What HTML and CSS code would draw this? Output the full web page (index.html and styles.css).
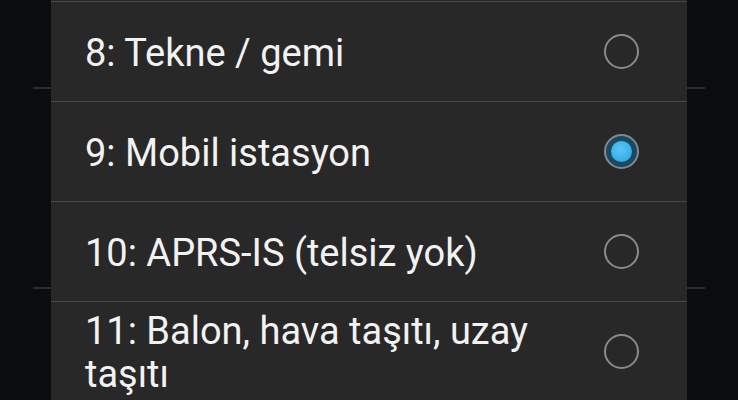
FILE: index.html
```html
<!DOCTYPE html>
<html lang="tr">
<head>
<meta charset="utf-8">
<link rel="stylesheet" href="styles.css">
</head>
<body>
<div class="backdrop">
  <div class="bg-line bg-line-1"></div>
  <div class="bg-line bg-line-2"></div>
</div>
<div class="dialog">
  <div class="item">
    <span class="label">8: Tekne / gemi</span>
    <span class="radio"></span>
  </div>
  <div class="item">
    <span class="label">9: Mobil istasyon</span>
    <span class="radio checked"><span class="dot"></span></span>
  </div>
  <div class="item">
    <span class="label">10: APRS-IS (telsiz yok)</span>
    <span class="radio"></span>
  </div>
  <div class="item">
    <span class="label">11: Balon, hava taşıtı, uzay taşıtı</span>
    <span class="radio"></span>
  </div>
</div>
</body>
</html>
```

FILE: styles.css
```css
html, body {
  margin: 0;
  padding: 0;
  width: 738px;
  height: 400px;
  overflow: hidden;
  background: #0b0c0e;
  font-family: Roboto, "Noto Sans", sans-serif;
}

.backdrop {
  position: absolute;
  inset: 0;
  z-index: 0;
}

.bg-line {
  position: absolute;
  left: 33px;
  width: 672px;
  height: 2px;
  background: #2b2c2e;
}

.bg-line-1 { top: 87px; }
.bg-line-2 { top: 287px; }

.dialog {
  position: relative;
  z-index: 1;
  margin-left: 51px;
  width: 636px;
  height: 400px;
  background: #282828;
  padding-top: 1px;
  box-sizing: border-box;
}

.item {
  height: 100px;
  box-sizing: border-box;
  border-top: 1px solid #474747;
  display: flex;
  align-items: center;
  padding: 3px 48px 0 34px;
}

.label {
  flex: 1;
  color: #f2f2f2;
  font-size: 38px;
  line-height: 43px;
  padding-right: 40px;
}

.radio {
  flex: none;
  width: 35px;
  height: 35px;
  margin-top: -3px;
  box-sizing: border-box;
  border: 2px solid #8a8a8a;
  border-radius: 50%;
  display: flex;
  align-items: center;
  justify-content: center;
}

.radio.checked {
  background: #1c4860;
  border-color: #7f8a90;
}

.dot {
  width: 21px;
  height: 21px;
  border-radius: 50%;
  background: radial-gradient(circle at 45% 40%, #5cc6f4 0%, #3ab2ea 60%, #2b9fd6 100%);
}
```
